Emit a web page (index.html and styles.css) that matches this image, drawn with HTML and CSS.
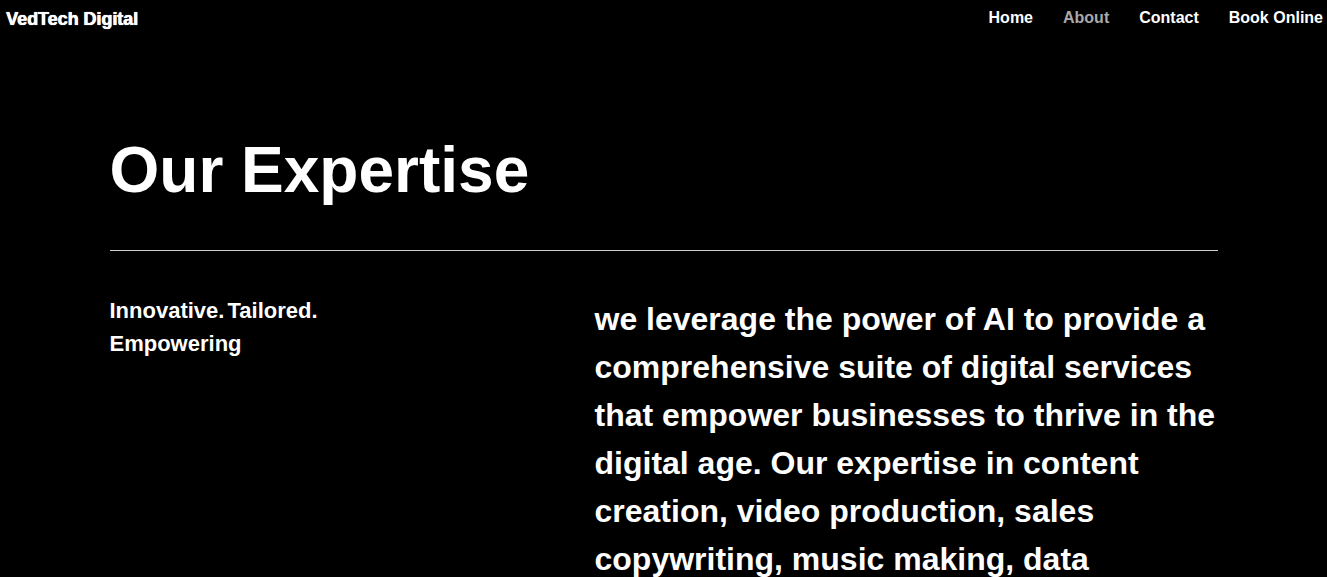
FILE: index.html
```html
<!DOCTYPE html>
<html lang="en">
<head>
<meta charset="utf-8">
<title>VedTech Digital - About</title>
<link rel="stylesheet" href="styles.css">
</head>
<body>
<header class="site-header">
  <div class="logo">VedTech Digital</div>
  <nav class="nav">
    <a href="#" class="nav-link">Home</a>
    <a href="#" class="nav-link active">About</a>
    <a href="#" class="nav-link">Contact</a>
    <a href="#" class="nav-link">Book Online</a>
  </nav>
</header>
<main class="section">
  <h1 class="title">Our Expertise</h1>
  <hr class="divider">
  <div class="columns">
    <p class="tagline">Innovative. Tailored. Empowering</p>
    <p class="lead">we leverage the power of AI to provide a comprehensive suite of digital services that empower businesses to thrive in the digital age. Our expertise in content creation, video production, sales copywriting, music making, data analysis and more ensures that your business stands out.</p>
  </div>
</main>
</body>
</html>
```
FILE: styles.css
```css
html, body {
  margin: 0;
  padding: 0;
  background: #000;
  color: #fff;
  font-family: "Liberation Sans", Arial, sans-serif;
}
.site-header {
  display: flex;
  justify-content: space-between;
  align-items: center;
  height: 36px;
  padding: 0 4px 0 6px;
}
.logo {
  font-size: 18px;
  font-weight: 700;
  letter-spacing: -0.05px;
  margin-top: 2px;
  text-shadow: 0.5px 0 0 #fff, 0 0 1px #cfd8ff;
}
.nav {
  display: flex;
  gap: 30px;
}
.nav-link {
  color: #fff;
  text-decoration: none;
  font-size: 16px;
  font-weight: 700;
}
.nav-link.active {
  color: #a9a9a9;
}
.section {
  width: 1108px;
  margin: 0 auto;
  padding-top: 96px;
}
.title {
  margin: 0;
  font-size: 64px;
  font-weight: 700;
  line-height: 76px;
}
.divider {
  border: 0;
  border-top: 1px solid #d0d0d0;
  margin: 42px 0 0;
}
.columns {
  display: grid;
  grid-template-columns: 485px 1fr;
  padding-top: 43px;
}
.tagline {
  margin: 0;
  width: 230px;
  font-size: 22px;
  line-height: 33px;
  font-weight: 700;
  word-spacing: -3px;
}
.lead {
  margin: 1px 0 0;
  font-size: 32px;
  line-height: 48px;
  font-weight: 700;
}
```
